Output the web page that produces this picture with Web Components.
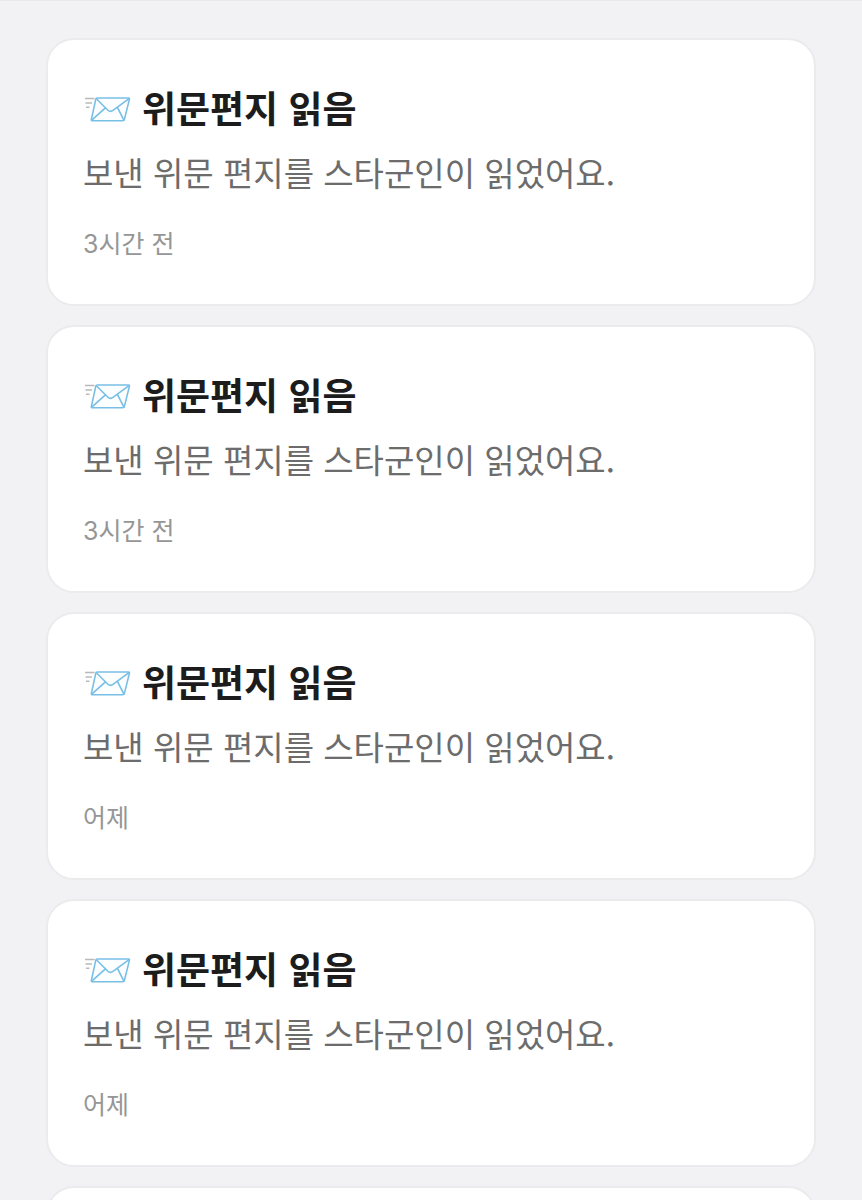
<!DOCTYPE html>
<html lang="ko">
<head>
  <meta charset="UTF-8">
  <meta name="viewport" content="width=device-width, initial-scale=1.0">
  <title>알림</title>
  <style>
    body {
      margin: 0;
      background-color: #f2f2f5;
      font-family: "Noto Sans CJK KR", sans-serif;
    }
  </style>
</head>
<body>
  <notification-list>
    <notification-card>
      <span slot="title">위문편지 읽음</span>
      <span slot="message">보낸 위문 편지를 스타군인이 읽었어요.</span>
      <span slot="time">3시간 전</span>
    </notification-card>
    <notification-card>
      <span slot="title">위문편지 읽음</span>
      <span slot="message">보낸 위문 편지를 스타군인이 읽었어요.</span>
      <span slot="time">3시간 전</span>
    </notification-card>
    <notification-card>
      <span slot="title">위문편지 읽음</span>
      <span slot="message">보낸 위문 편지를 스타군인이 읽었어요.</span>
      <span slot="time">어제</span>
    </notification-card>
    <notification-card>
      <span slot="title">위문편지 읽음</span>
      <span slot="message">보낸 위문 편지를 스타군인이 읽었어요.</span>
      <span slot="time">어제</span>
    </notification-card>
    <notification-card></notification-card>
  </notification-list>

  <script>
    class LetterIcon extends HTMLElement {
      constructor() {
        super();
        this.attachShadow({ mode: "open" });
        this.shadowRoot.innerHTML = `
          <style>
            :host {
              display: block;
              flex: none;
              width: 48px;
              height: 32px;
            }
            svg {
              display: block;
              width: 100%;
              height: 100%;
            }
          </style>
          <svg viewBox="0 -2 48 32" fill="none" aria-hidden="true">
            <g stroke="#b9b9bb" stroke-width="1.4">
              <path d="M2 5.5h9.5M2.5 10h6.5M3 14.2h3.5"/>
            </g>
            <g stroke="#78bfe6" stroke-width="1.6" stroke-linejoin="round" stroke-linecap="round">
              <path fill="#fdfeff" d="M14.2 5H45.3Q46.8 5 46.4 6.4L41.4 26.4Q41 27.8 39.6 27.8H9.6Q8 27.8 8.4 26.3L12.8 6.2Q13.1 5 14.2 5Z"/>
              <path d="M8.8 27.2L22.4 14.8M40.9 27.2L34.4 14.4"/>
              <path d="M13.4 5.8L24.9 17.2Q27.2 19.4 30 17.4L46 5.6"/>
            </g>
          </svg>
        `;
      }
    }

    class NotificationCard extends HTMLElement {
      constructor() {
        super();
        this.attachShadow({ mode: "open" });
        this.render();
      }

      render() {
        this.shadowRoot.innerHTML = `
          <style>
            :host {
              display: block;
            }
            article {
              box-sizing: border-box;
              min-height: 268px;
              padding: 41px 35px 32px;
              border: 2px solid #ebebed;
              border-radius: 28px;
              background-color: #fff;
            }
            header {
              display: flex;
              align-items: center;
              gap: 11px;
            }
            h2, p {
              margin: 0;
            }
            h2 {
              color: #1c1c1c;
              font-size: 37px;
              font-weight: 700;
              line-height: 52px;
            }
            .message {
              margin-top: 15px;
              color: #6c6c6c;
              font-size: 33px;
              line-height: 48px;
            }
            .time {
              margin-top: 30px;
              color: #969696;
              font-family: Inter, "Noto Sans CJK KR", sans-serif;
              font-size: 25px;
              line-height: 36px;
            }
          </style>
          <article>
            <header>
              <letter-icon></letter-icon>
              <h2><slot name="title"></slot></h2>
            </header>
            <p class="message"><slot name="message"></slot></p>
            <p class="time"><slot name="time"></slot></p>
          </article>
        `;
      }
    }

    class NotificationList extends HTMLElement {
      constructor() {
        super();
        this.attachShadow({ mode: "open" });
        this.shadowRoot.innerHTML = `
          <style>
            :host {
              display: block;
              box-sizing: border-box;
              height: 100vh;
              overflow: hidden;
              border-top: 1px solid #e9e9eb;
            }
            section {
              display: flex;
              flex-direction: column;
              gap: 19px;
              padding: 37px 46px;
            }
          </style>
          <section><slot></slot></section>
        `;
      }
    }

    customElements.define("letter-icon", LetterIcon);
    customElements.define("notification-card", NotificationCard);
    customElements.define("notification-list", NotificationList);
  </script>
</body>
</html>
